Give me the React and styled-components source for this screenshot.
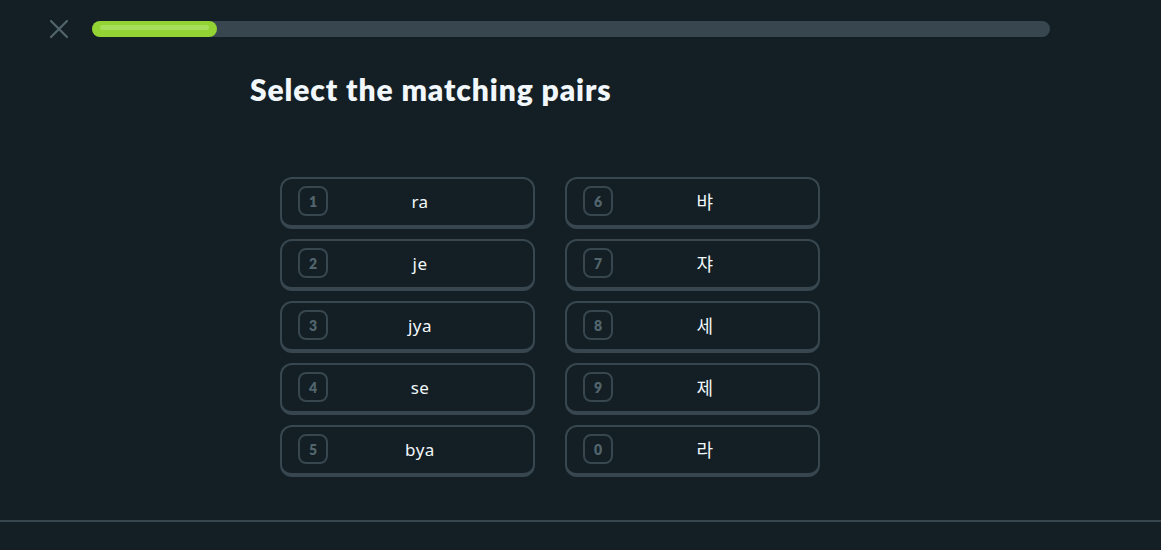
import React from "react";
import styled, { createGlobalStyle } from "styled-components";

const GlobalStyle = createGlobalStyle`
  html, body {
    margin: 0;
    padding: 0;
    background: #131f24;
  }
  body {
    font-family: "Lato", "Noto Sans", "Noto Sans CJK KR", sans-serif;
    color: #f1f7fb;
  }
`;

const Page = styled.div`
  width: 1161px;
  height: 550px;
  display: flex;
  flex-direction: column;
  background: #131f24;
  overflow: hidden;
`;

const TopBar = styled.div`
  display: flex;
  align-items: center;
  height: 58px;
  padding: 0 111px 0 48px;
  gap: 22px;
`;

const CloseButton = styled.button`
  width: 22px;
  height: 22px;
  padding: 0;
  border: none;
  background: transparent;
  display: flex;
  align-items: center;
  justify-content: center;
  cursor: pointer;
`;

const Track = styled.div`
  flex: 1;
  height: 16px;
  border-radius: 8px;
  background: #37464f;
  display: flex;
`;

const Fill = styled.div`
  height: 16px;
  border-radius: 8px;
  background: #93d333;
  padding: 4px 8px 0;
  box-sizing: border-box;
`;

const Shine = styled.div`
  height: 5px;
  border-radius: 3px;
  background: #a8df5a;
`;

const Main = styled.main`
  flex: 1;
  width: 600px;
  margin-left: 250px;
  display: flex;
  flex-direction: column;
`;

const Title = styled.h1`
  margin: 12px 0 0;
  font-family: "Lato", "Noto Sans", sans-serif;
  font-weight: 800;
  font-size: 30px;
  line-height: 38px;
  letter-spacing: 0.9px;
  color: #f1f7fb;
`;

const Board = styled.div`
  margin: 69px auto 0;
  display: grid;
  grid-template-columns: 255px 255px;
  column-gap: 30px;
`;

const Column = styled.div`
  display: flex;
  flex-direction: column;
  gap: 10px;
`;

const Tile = styled.button`
  height: 52px;
  box-sizing: border-box;
  display: flex;
  align-items: center;
  padding: 0 21px 2px 16px;
  background: transparent;
  border: 2px solid #37464f;
  border-bottom-width: 4px;
  border-radius: 12px;
  cursor: pointer;
`;

const Key = styled.span`
  width: 30px;
  height: 30px;
  box-sizing: border-box;
  border: 2px solid #37464f;
  border-radius: 8px;
  display: flex;
  align-items: center;
  justify-content: center;
  font-family: "Lato", "Noto Sans", sans-serif;
  font-weight: 800;
  font-size: 14px;
  color: #52656d;
`;

const Label = styled.span`
  flex: 1;
  text-align: center;
  font-family: "Noto Sans", "Noto Sans CJK KR", sans-serif;
  font-size: ${({ $korean }) => ($korean ? "18px" : "17px")};
  letter-spacing: 0.5px;
  color: #f1f7fb;
`;

const Footer = styled.footer`
  height: 28px;
  border-top: 2px solid #37464f;
`;

const left = [
  { key: "1", text: "ra" },
  { key: "2", text: "je" },
  { key: "3", text: "jya" },
  { key: "4", text: "se" },
  { key: "5", text: "bya" },
];

const right = [
  { key: "6", text: "뱌" },
  { key: "7", text: "쟈" },
  { key: "8", text: "세" },
  { key: "9", text: "제" },
  { key: "0", text: "라" },
];

const CloseIcon = () => (
  <svg width="20" height="20" viewBox="0 0 20 20">
    <path
      d="M2 2 L18 18 M18 2 L2 18"
      stroke="#52656d"
      strokeWidth="2.2"
      strokeLinecap="round"
      fill="none"
    />
  </svg>
);

const App = () => (
  <Page>
    <GlobalStyle />
    <TopBar>
      <CloseButton aria-label="Close">
        <CloseIcon />
      </CloseButton>
      <Track>
        <Fill style={{ width: `${(125 / 958) * 100}%` }}>
          <Shine />
        </Fill>
      </Track>
    </TopBar>
    <Main>
      <Title>Select the matching pairs</Title>
      <Board>
        <Column>
          {left.map((item) => (
            <Tile key={item.key}>
              <Key>{item.key}</Key>
              <Label>{item.text}</Label>
            </Tile>
          ))}
        </Column>
        <Column>
          {right.map((item) => (
            <Tile key={item.key}>
              <Key>{item.key}</Key>
              <Label $korean>{item.text}</Label>
            </Tile>
          ))}
        </Column>
      </Board>
    </Main>
    <Footer />
  </Page>
);

export default App;
